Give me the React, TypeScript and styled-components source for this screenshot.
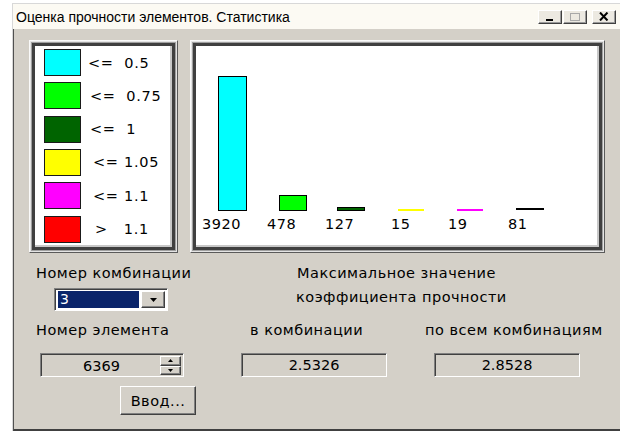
import React from 'react';
import styled, { createGlobalStyle } from 'styled-components';

const GlobalStyle = createGlobalStyle`
  html, body {
    margin: 0;
    background: #fff;
  }
  body {
    font-family: "DejaVu Sans", sans-serif;
    color: #000;
  }
`;

const FACE = '#d4d0c8';

const Window = styled.div`
  margin: 3px 0 0 12px;
  width: 607px;
  border-top: 1px solid #d8d8d8;
  border-left: 1px solid #d8d8d8;
`;

const TitleBar = styled.div`
  height: 25px;
  display: flex;
  align-items: center;
  padding: 0 4px 0 3px;
  background: #fcfaf3;
  font: 14px "Liberation Sans", Arial, sans-serif;
`;

const Title = styled.span`
  flex: 1;
`;

const CaptionButton = styled.div<{ $gap?: number }>`
  width: 24px;
  height: 14px;
  margin-left: ${p => p.$gap ?? 0}px;
  box-sizing: border-box;
  display: flex;
  align-items: center;
  justify-content: center;
  background: #ece9e1;
  border: 1px solid;
  border-color: #fff #404040 #404040 #fff;
  box-shadow: inset -1px -1px 0 #9a9a9a;
`;

const Body = styled.div`
  height: 402px;
  box-sizing: border-box;
  padding: 11px 0 0 15px;
  background: ${FACE};
  border-left: 1px solid #505050;
  border-bottom: 2px solid #404040;
  font-size: 14.5px;
  letter-spacing: 0.5px;
`;

const TopRow = styled.div`
  display: flex;
  gap: 12px;
  height: 213px;
`;

const Panel = styled.div<{ $width: number }>`
  width: ${p => p.$width}px;
  box-sizing: border-box;
  padding: 5px 7px 7px 5px;
  background: #fff;
  border: 1px solid;
  border-color: #fafafa #5a5a5a #5a5a5a #fafafa;
  box-shadow: inset 0 0 0 1px #e4e4e4, inset 0 0 0 2px #a0a0a0,
    inset 0 0 0 5px #404040, inset -7px -7px 0 0 #c8c8c8;
`;

const LegendList = styled.div`
  display: flex;
  flex-direction: column;
  gap: 6.33px;
  padding: 3px 0 0 9px;
`;

const LegendRow = styled.div`
  display: flex;
  align-items: center;
  height: 27px;
`;

const Swatch = styled.div<{ $color: string }>`
  width: 37px;
  height: 27px;
  box-sizing: border-box;
  background: ${p => p.$color};
  border: 1px solid #1a1a1a;
`;

const LegendLabel = styled.span<{ $indent: number }>`
  margin-left: ${p => p.$indent}px;
  white-space: pre;
  letter-spacing: 0.7px;
`;

const Form = styled.div`
  margin-top: 11px;
  display: grid;
  grid-template-columns: 212px 184px 1fr;
  grid-template-rows: 24px 33px 32px 33px 29px;
  align-items: start;
`;

const Label = styled.div<{ $indent?: number; $span?: boolean }>`
  margin-left: ${p => p.$indent ?? 0}px;
  line-height: 19px;
  white-space: nowrap;
  grid-column: ${p => (p.$span ? 'span 2' : 'auto')};
`;

const Sunken = styled.div`
  box-sizing: border-box;
  border: 1px solid;
  border-color: #808080 #fff #fff #808080;
  box-shadow: inset 1px 1px 0 #404040;
`;

const Combo = styled(Sunken)`
  margin-left: 25px;
  width: 114px;
  height: 23px;
  display: flex;
  padding: 2px 2px 2px 3px;
  background: #fff;
`;

const Selected = styled.div`
  flex: 1;
  margin-right: 2px;
  background: #0a246a;
  color: #fff;
  font-size: 14px;
  line-height: 17px;
  padding-left: 2px;
`;

const RaisedButton = styled.div`
  box-sizing: border-box;
  display: flex;
  align-items: center;
  justify-content: center;
  background: ${FACE};
  border: 1px solid;
  border-color: #fff #404040 #404040 #fff;
  box-shadow: inset -1px -1px 0 #808080;
`;

const DropButton = styled(RaisedButton)`
  width: 24px;
`;

const ValueBox = styled(Sunken)<{ $indent?: number }>`
  margin-left: ${p => p.$indent ?? 0}px;
  width: 146px;
  height: 24px;
  display: flex;
  align-items: center;
  justify-content: center;
  letter-spacing: 0;
`;

const SpinBox = styled(Sunken)`
  margin-left: 11px;
  width: 144px;
  height: 24px;
  display: flex;
  align-items: center;
  padding: 2px 2px 1px 2px;
`;

const SpinValue = styled.span`
  flex: 1;
  text-align: center;
  letter-spacing: 0;
`;

const SpinButtons = styled.div`
  width: 21px;
  height: 100%;
  display: flex;
  flex-direction: column;
`;

const SpinArrow = styled(RaisedButton)`
  flex: 1;
`;

const PushButton = styled(RaisedButton)`
  margin-left: 91px;
  width: 76px;
  height: 29px;
  grid-column: 1;
`;

const Arrow = ({ down, size = 4 }: { down?: boolean; size?: number }) => (
  <svg width={size * 2 - 1} height={size} viewBox={`0 0 ${size * 2 - 1} ${size}`}>
    <polygon
      points={
        down
          ? `0,0 ${size * 2 - 1},0 ${size - 0.5},${size}`
          : `0,${size} ${size * 2 - 1},${size} ${size - 0.5},0`
      }
      fill="#000"
    />
  </svg>
);

const legend = [
  { color: '#00ffff', label: '<=  0.5', indent: 7 },
  { color: '#00ff00', label: '<=  0.75', indent: 9 },
  { color: '#006400', label: '<=  1', indent: 9 },
  { color: '#ffff00', label: '<= 1.05', indent: 12 },
  { color: '#ff00ff', label: '<= 1.1', indent: 12 },
  { color: '#ff0000', label: '>   1.1', indent: 14 },
];

// bar x, width and drawn height in chart pixels; labels sit under each bar
const bars = [
  { color: '#00ffff', x: 22, w: 29, h: 135, value: '3920', lx: 6 },
  { color: '#00ff00', x: 83, w: 28, h: 16, value: '478', lx: 71 },
  { color: '#006400', x: 141, w: 28, h: 4, value: '127', lx: 129 },
  { color: '#ffff00', x: 202, w: 26, h: 0, value: '15', lx: 195 },
  { color: '#ff00ff', x: 261, w: 26, h: 0, value: '19', lx: 252 },
  { color: '#000000', x: 320, w: 28, h: 1, value: '81', lx: 312 },
];

const BASE = 165;

const Chart = () => (
  <svg width="401" height="199" viewBox="0 0 401 199">
    {bars.map(b =>
      b.h > 1 ? (
        <rect
          key={b.value}
          x={b.x + 0.5}
          y={BASE - b.h + 0.5}
          width={b.w - 1}
          height={b.h - 1}
          fill={b.color}
          stroke="#000"
          strokeWidth={1}
        />
      ) : (
        <rect key={b.value} x={b.x} y={BASE - 2 - b.h} width={b.w} height={2} fill={b.color} />
      )
    )}
    {bars.map(b => (
      <text
        key={`t${b.value}`}
        x={b.lx}
        y={183}
        fontFamily='"DejaVu Sans", sans-serif'
        fontSize="14.5"
        fill="#000"
      >
        {b.value}
      </text>
    ))}
  </svg>
);

const App = () => (
  <>
    <GlobalStyle />
    <Window>
      <TitleBar>
        <Title>Оценка прочности элементов. Статистика</Title>
        <CaptionButton>
          <svg width="10" height="10" viewBox="0 0 10 10">
            <rect x="1" y="7" width="7" height="2" fill="#000" />
          </svg>
        </CaptionButton>
        <CaptionButton $gap={1}>
          <svg width="12" height="10" viewBox="0 0 12 10">
            <rect x="1.5" y="1.5" width="9" height="7" fill="none" stroke="#a8a8a8" />
            <rect x="1" y="1" width="10" height="1" fill="#a8a8a8" />
          </svg>
        </CaptionButton>
        <CaptionButton $gap={5}>
          <svg width="10" height="9" viewBox="0 0 10 9">
            <path d="M1 0.5 L8.5 8.5 M8.5 0.5 L1 8.5" stroke="#000" strokeWidth="2" />
          </svg>
        </CaptionButton>
      </TitleBar>
      <Body>
        <TopRow>
          <Panel $width={149}>
            <LegendList>
              {legend.map(item => (
                <LegendRow key={item.label}>
                  <Swatch $color={item.color} />
                  <LegendLabel $indent={item.indent}>{item.label}</LegendLabel>
                </LegendRow>
              ))}
            </LegendList>
          </Panel>
          <Panel $width={415}>
            <Chart />
          </Panel>
        </TopRow>
        <Form>
          <Label $indent={7}>Номер комбинации</Label>
          <Label $indent={56} $span>Максимальное значение</Label>

          <Combo>
            <Selected>3</Selected>
            <DropButton>
              <Arrow down />
            </DropButton>
          </Combo>
          <Label $indent={55} $span>коэффициента прочности</Label>

          <Label $indent={7}>Номер элемента</Label>
          <Label $indent={9}>в комбинации</Label>
          <Label>по всем комбинациям</Label>

          <SpinBox>
            <SpinValue>6369</SpinValue>
            <SpinButtons>
              <SpinArrow>
                <Arrow size={3} />
              </SpinArrow>
              <SpinArrow>
                <Arrow down size={3} />
              </SpinArrow>
            </SpinButtons>
          </SpinBox>
          <ValueBox>2.5326</ValueBox>
          <ValueBox $indent={9}>2.8528</ValueBox>

          <PushButton>Ввод...</PushButton>
        </Form>
      </Body>
    </Window>
  </>
);

export default App;
